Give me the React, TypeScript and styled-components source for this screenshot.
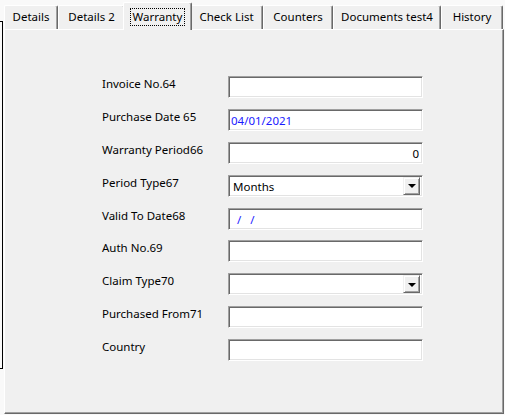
import { Fragment } from "react"
import styled, { createGlobalStyle } from "styled-components"

const GlobalStyle = createGlobalStyle`
	html, body {
		margin: 0;
		padding: 0;
		background: #f9f9f9;
		font-family: "Noto Sans", "Open Sans", sans-serif;
		font-size: 11.5px;
		color: #000;
	}
`

const Screen = styled.div`
	display: flex;
	align-items: flex-start;
	width: 505px;
	height: 415px;
	overflow: hidden;
`

const SideFrame = styled.div`
	box-sizing: border-box;
	width: 3px;
	height: 348px;
	margin-top: 21px;
	border: 1px solid #000;
	border-left: none;
`

const TabControl = styled.div`
	display: flex;
	flex-direction: column;
	width: 500px;
	margin-left: 1px;
`

const TabStrip = styled.div`
	display: flex;
	align-items: flex-end;
	height: 29px;
`

const Tab = styled.div<{ $width: number; $active?: boolean }>`
	box-sizing: border-box;
	display: flex;
	align-items: ${p => (p.$active ? "flex-start" : "center")};
	justify-content: center;
	width: ${p => p.$width + (p.$active ? 4 : 0)}px;
	height: ${p => (p.$active ? 28 : 24)}px;
	margin: ${p => (p.$active ? "0 -2px -1px" : "0")};
	padding: ${p => (p.$active ? "5px 0 0" : "0 0 2px")};
	position: relative;
	z-index: ${p => (p.$active ? 1 : 0)};
	background: #f0f0f0;
	border-top: 1px solid #fff;
	border-left: 1px solid #fff;
	border-right: 1px solid #696969;
	border-radius: 2px 2px 0 0;
	box-shadow: inset -1px 0 0 #a0a0a0;
	white-space: nowrap;
`

const FocusMark = styled.span`
	padding: 1px 3px 2px;
	outline: 1px dotted #000;
	outline-offset: -1px;
`

const Panel = styled.div`
	box-sizing: border-box;
	height: 385px;
	padding: 46px 0 0 97px;
	background: #f0f0f0;
	border-top: 1px solid #fff;
	border-left: 1px solid #fff;
	border-right: 1px solid #696969;
	border-bottom: 1px solid #696969;
	box-shadow: inset -1px -1px 0 #a0a0a0;
`

const FormGrid = styled.div`
	display: grid;
	grid-template-columns: 126px 195px;
	grid-auto-rows: 22px;
	row-gap: 10.9px;
`

const Label = styled.div`
	line-height: 16px;
	white-space: nowrap;
`

const sunken = `
	box-sizing: border-box;
	width: 195px;
	height: 22px;
	background: #fff;
	border: 1px solid;
	border-color: #a0a0a0 #fff #fff #a0a0a0;
	box-shadow: inset 1px 1px 0 #696969, inset -1px -1px 0 #e3e3e3;
`

const TextBox = styled.input<{ $align?: "left" | "right"; $blue?: boolean }>`
	${sunken}
	margin: 0;
	padding: 1px 3px 0 2px;
	font: inherit;
	color: ${p => (p.$blue ? "#1a1aff" : "#000")};
	text-align: ${p => p.$align ?? "left"};
	white-space: pre;
	outline: none;
`

const ComboBox = styled.div`
	${sunken}
	display: flex;
	align-items: center;
	padding: 2px 2px 2px 4px;
`

const ComboText = styled.span`
	flex: 1;
	padding-top: 1px;
`

const DropButton = styled.div`
	box-sizing: border-box;
	display: flex;
	align-items: center;
	justify-content: center;
	width: 17px;
	height: 18px;
	background: #f0f0f0;
	border: 1px solid;
	border-color: #f0f0f0 #696969 #696969 #f0f0f0;
	box-shadow: inset 1px 1px 0 #fff, inset -1px -1px 0 #a0a0a0;
`

const Arrow = styled.span`
	width: 0;
	height: 0;
	margin-top: 1px;
	border-left: 4px solid transparent;
	border-right: 4px solid transparent;
	border-top: 4px solid #000;
`

const tabs = [
	{ label: "Details", width: 54 },
	{ label: "Details 2", width: 67 },
	{ label: "Warranty", width: 65, active: true },
	{ label: "Check List", width: 73 },
	{ label: "Counters", width: 70 },
	{ label: "Documents test4", width: 108 },
	{ label: "History", width: 62 },
]

type Field = {
	label: string
	value?: string
	align?: "left" | "right"
	blue?: boolean
	combo?: boolean
}

const fields: Field[] = [
	{ label: "Invoice No.64" },
	{ label: "Purchase Date 65", value: "04/01/2021", blue: true },
	{ label: "Warranty Period66", value: "0", align: "right" },
	{ label: "Period Type67", value: "Months", combo: true },
	{ label: "Valid To Date68", value: "  /   /", blue: true },
	{ label: "Auth No.69" },
	{ label: "Claim Type70", value: "", combo: true },
	{ label: "Purchased From71" },
	{ label: "Country" },
]

export default function App() {
	return (
		<Screen>
			<GlobalStyle />
			<SideFrame />
			<TabControl>
				<TabStrip>
					{tabs.map(tab => (
						<Tab key={tab.label} $width={tab.width} $active={tab.active}>
							{tab.active ? <FocusMark>{tab.label}</FocusMark> : tab.label}
						</Tab>
					))}
				</TabStrip>
				<Panel>
					<FormGrid>
						{fields.map(field => (
							<Fragment key={field.label}>
								<Label>{field.label}</Label>
								{field.combo ? (
									<ComboBox>
										<ComboText>{field.value}</ComboText>
										<DropButton>
											<Arrow />
										</DropButton>
									</ComboBox>
								) : (
									<TextBox
										readOnly
										value={field.value ?? ""}
										$align={field.align}
										$blue={field.blue}
									/>
								)}
							</Fragment>
						))}
					</FormGrid>
				</Panel>
			</TabControl>
		</Screen>
	)
}
